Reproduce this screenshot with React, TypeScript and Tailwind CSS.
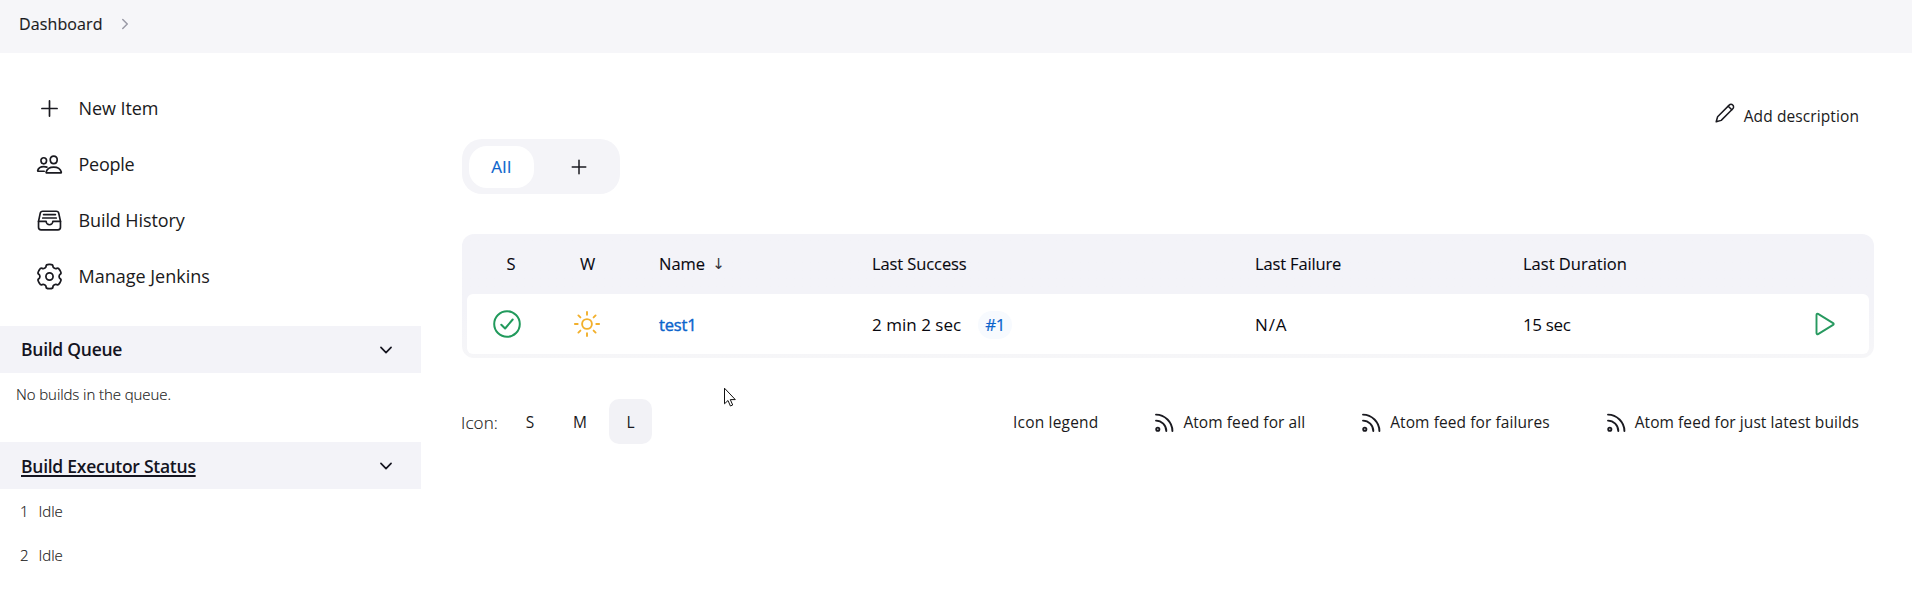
import React from "react";
import {
  IoAddOutline,
  IoPeopleOutline,
  IoFileTrayFullOutline,
  IoChevronDown,
  IoChevronForward,
} from "react-icons/io5";

/* Six rounded teeth around a 28x28 box, smoothed through the midpoints. */
function gearPath() {
  const pts: [number, number][] = [];
  for (let tooth = 0; tooth < 6; tooth++) {
    for (const [offset, radius] of [[-15, 13], [15, 13], [21, 10.1], [39, 10.1]]) {
      const a = ((tooth * 60 + offset - 90) * Math.PI) / 180;
      pts.push([14 + radius * Math.cos(a), 14 + radius * Math.sin(a)]);
    }
  }
  const lerp = (p: number[], q: number[], t: number) =>
    `${(p[0] + (q[0] - p[0]) * t).toFixed(2)} ${(p[1] + (q[1] - p[1]) * t).toFixed(2)}`;
  return (
    pts
      .map((p, i) => {
        const prev = pts[(i + pts.length - 1) % pts.length];
        const next = pts[(i + 1) % pts.length];
        return `${i ? "L" : "M"}${lerp(p, prev, 0.42)}Q${p[0].toFixed(2)} ${p[1].toFixed(2)} ${lerp(p, next, 0.42)}`;
      })
      .join("") + "Z"
  );
}

const GEAR = gearPath();

function GearIcon({ className }: { className?: string }) {
  return (
    <svg viewBox="0 0 28 28" className={className} fill="none" stroke="currentColor" strokeWidth="1.8" strokeLinejoin="round">
      <path d={GEAR} />
      <circle cx="14" cy="14" r="3.7" />
    </svg>
  );
}

const tasks = [
  { label: "New Item", Icon: IoAddOutline, cls: "tracking-[-0.08px]" },
  { label: "People", Icon: IoPeopleOutline, cls: "tracking-[-0.25px]" },
  { label: "Build History", Icon: IoFileTrayFullOutline, cls: "tracking-[-0.1px]" },
  { label: "Manage Jenkins", Icon: GearIcon, cls: "tracking-normal" },
];

function PencilIcon() {
  return (
    <svg viewBox="0 0 20 20" className="size-5" fill="none" stroke="currentColor" strokeWidth="1.5" strokeLinejoin="round" strokeLinecap="round">
      <path d="M1.2 18.8 2.6 13.8 14.2 2.1a2.5 2.5 0 0 1 3.6 0 2.5 2.5 0 0 1 0 3.6L6.2 17.4Z" />
      <path d="m13.2 3.2 3.6 3.6" />
    </svg>
  );
}

function FeedIcon() {
  return (
    <svg viewBox="0 0 20 20" className="size-5" fill="none" stroke="currentColor" strokeWidth="1.9" strokeLinecap="round">
      <circle cx="3.8" cy="16.2" r="1.6" />
      <path d="M2 7.6c5.6 0 10.3 4.7 10.3 10.4" />
      <path d="M2 1.6c8.8 0 16.4 7.6 16.4 16.4" />
    </svg>
  );
}

function SuccessIcon() {
  return (
    <svg viewBox="0 0 28 28" className="size-7" fill="none" stroke="#219a5c" strokeWidth="2" strokeLinecap="round" strokeLinejoin="round">
      <circle cx="14" cy="14" r="12.8" />
      <path d="m8.3 14.7 3.8 3.8 7.6-9" />
    </svg>
  );
}

function SunIcon() {
  return (
    <svg viewBox="0 0 28 28" className="size-7" fill="none" stroke="#f2b02c" strokeWidth="1.9" strokeLinecap="round">
      <circle cx="14" cy="14" r="4.9" />
      <path d="M14 1.9v2.8M14 23.3v2.8M1.9 14h2.8M23.3 14h2.8M5.4 5.4l2 2M20.6 20.6l2 2M5.4 22.6l2-2M20.6 7.4l2-2" />
    </svg>
  );
}

function PlayIcon() {
  return (
    <svg viewBox="0 0 20 24" className="h-6 w-5" fill="none" stroke="#27995f" strokeWidth="1.9" strokeLinejoin="round">
      <path d="M1.5 2.9v18.2c0 1 .8 1.4 1.6 1l15-9.2c.8-.5.8-1.3 0-1.8l-15-9.2c-.8-.4-1.6 0-1.6 1Z" />
    </svg>
  );
}

function Pointer() {
  return (
    <svg viewBox="0 0 14 21" className="absolute left-[723px] top-[387px] h-[21px] w-[14px]" fill="#fff" stroke="#111" strokeWidth="1">
      <path d="M1.5 1.2v15.6l3.5-3.3 2.4 5.5 2.3-1-2.4-5.4h5Z" />
    </svg>
  );
}

function PanelBar({ children }: { children: React.ReactNode }) {
  return (
    <div className="flex h-[47px] w-[421px] items-center justify-between bg-[#f3f3f8] pl-[21px] pr-[26px] text-[17.5px] font-semibold tracking-[-0.26px] text-[#14141f]">
      {children}
      <IoChevronDown className="size-[18px]" />
    </div>
  );
}

function Feed({ label }: { label: string }) {
  return (
    <a className="flex items-center gap-[9px]">
      <FeedIcon />
      {label}
    </a>
  );
}

function TableRow({ className, cells }: { className: string; cells: React.ReactNode[] }) {
  return (
    <div className={`grid grid-cols-[78px_88px_213px_383px_268px_292px_1fr] items-center ${className}`}>
      {cells.map((cell, i) => (
        <div key={i} className="flex items-center">
          {cell}
        </div>
      ))}
    </div>
  );
}

export default function App() {
  return (
    <div className="relative h-[597px] w-[1912px] overflow-hidden bg-white font-['Open_Sans',sans-serif] text-[#1a1a20]">
      <header className="flex h-[53px] items-center bg-[#f6f6f9] pb-[5px] pl-[19px] text-[16px] tracking-[0.12px] [-webkit-text-stroke:0.15px]">
        Dashboard
        <IoChevronForward className="ml-[14px] size-4 text-[#9a9aa6]" />
      </header>
      <div className="flex">
        <aside className="w-[462px] pt-[27px]">
          <nav>
            {tasks.map(({ label, Icon, cls }) => (
              <a key={label} className="flex h-14 items-center gap-[15.5px] pl-9 pt-px text-[18px]">
                <Icon className="size-[27px]" />
                <span className={cls}>{label}</span>
              </a>
            ))}
          </nav>
          <section className="mt-[22px]">
            <PanelBar>Build Queue</PanelBar>
            <p className="h-[69px] pl-4 text-[15px] font-light leading-[42px] tracking-[-0.08px] [-webkit-text-stroke:0.15px]">
              No builds in the queue.
            </p>
          </section>
          <section>
            <PanelBar>
              <span className="pt-[2px] underline decoration-[1.5px] underline-offset-2">Build Executor Status</span>
            </PanelBar>
            {[1, 2].map((n) => (
              <div key={n} className="flex h-11 items-center pl-[20px] text-[15px] font-light [-webkit-text-stroke:0.15px]">
                <span className="w-[18.5px]">{n}</span>
                <span>Idle</span>
              </div>
            ))}
          </section>
        </aside>
        <main className="w-[1412px]">
          <div className="flex h-[86px] items-start justify-end gap-[9px] pr-[15px] pt-[50px] text-[15.5px] tracking-[0.1px]">
            <PencilIcon />
            <span className="pt-[3px] leading-[20px]">Add description</span>
          </div>
          <div className="flex h-[55px] w-[158px] items-center rounded-[20px] bg-[#f4f4f8] pl-[7px]">
            <a className="flex h-[42px] w-[65px] items-center justify-center rounded-[18px] bg-white text-[17px] tracking-[0.4px] text-[#0b64cc] [-webkit-text-stroke:0.15px]">
              All
            </a>
            <a className="flex flex-1 justify-center pl-[3px]">
              <IoAddOutline className="size-6" />
            </a>
          </div>
          <div className="mt-10 h-[124px] rounded-[12px] bg-linear-to-b from-[#f3f3f8] from-60% to-[#f6f6f8] px-[5px] pb-1">
            <TableRow
              className="h-[60px] pl-[26px] pt-px text-[16.5px] text-[#08080f] [-webkit-text-stroke:0.1px]"
              cells={[
                <span className="pl-[13.5px]">S</span>,
                <span className="pl-[9px]">W</span>,
                <span className="flex items-center gap-[7px]">
                  Name
                  <span className="font-['DejaVu_Sans'] text-[15px] leading-none text-[#33333b] [-webkit-text-stroke:0]">↓</span>
                </span>,
                <span className="tracking-[-0.1px]">Last Success</span>,
                <span className="tracking-[-0.15px]">Last Failure</span>,
                <span>Last Duration</span>,
              ]}
            />
            <TableRow
              className="h-[60px] rounded-[6px] bg-white pl-[26px] text-[17px] text-[#08080f]"
              cells={[
                <SuccessIcon />,
                <span className="pl-[2px]">
                  <SunIcon />
                </span>,
                <a className="pt-[2px] text-[16.5px] tracking-[-0.15px] text-[#0b64cc] [-webkit-text-stroke:0.4px]">test1</a>,
                <>
                  <span className="pt-[2px] tracking-[0.02px]">2 min 2 sec</span>
                  <a className="ml-[17px] mt-px rounded-full bg-[#f7fafe] px-[7px] leading-[28px] tracking-[-0.3px] text-[#0b64cc] [-webkit-text-stroke:0.2px]">#1</a>
                </>,
                <span className="pt-[2px] tracking-[0.9px]">N/A</span>,
                <span className="pt-[2px] tracking-[-0.35px]">15 sec</span>,
                <PlayIcon />,
              ]}
            />
          </div>
          <footer className="mt-[41px] flex h-[45px] items-center text-[15.5px] tracking-[0.08px]">
            <span className="-ml-px w-[48px] pt-[2px] text-[17px] font-light tracking-[0.1px] [-webkit-text-stroke:0.15px]">Icon:</span>
            <a className="w-[42px] pt-[2px] text-center">S</a>
            <a className="ml-[8px] w-[42px] pt-[2px] text-center">M</a>
            <a className="ml-[8px] flex h-[45px] w-[43px] items-center justify-center rounded-[10px] bg-[#f2f2f6] pt-[2px]">L</a>
            <div className="ml-auto flex items-center gap-[56px] pr-[15px] pt-[2px]">
              <a className="tracking-[0.18px]">Icon legend</a>
              <Feed label="Atom feed for all" />
              <Feed label="Atom feed for failures" />
              <Feed label="Atom feed for just latest builds" />
            </div>
          </footer>
        </main>
      </div>
      <Pointer />
    </div>
  );
}
